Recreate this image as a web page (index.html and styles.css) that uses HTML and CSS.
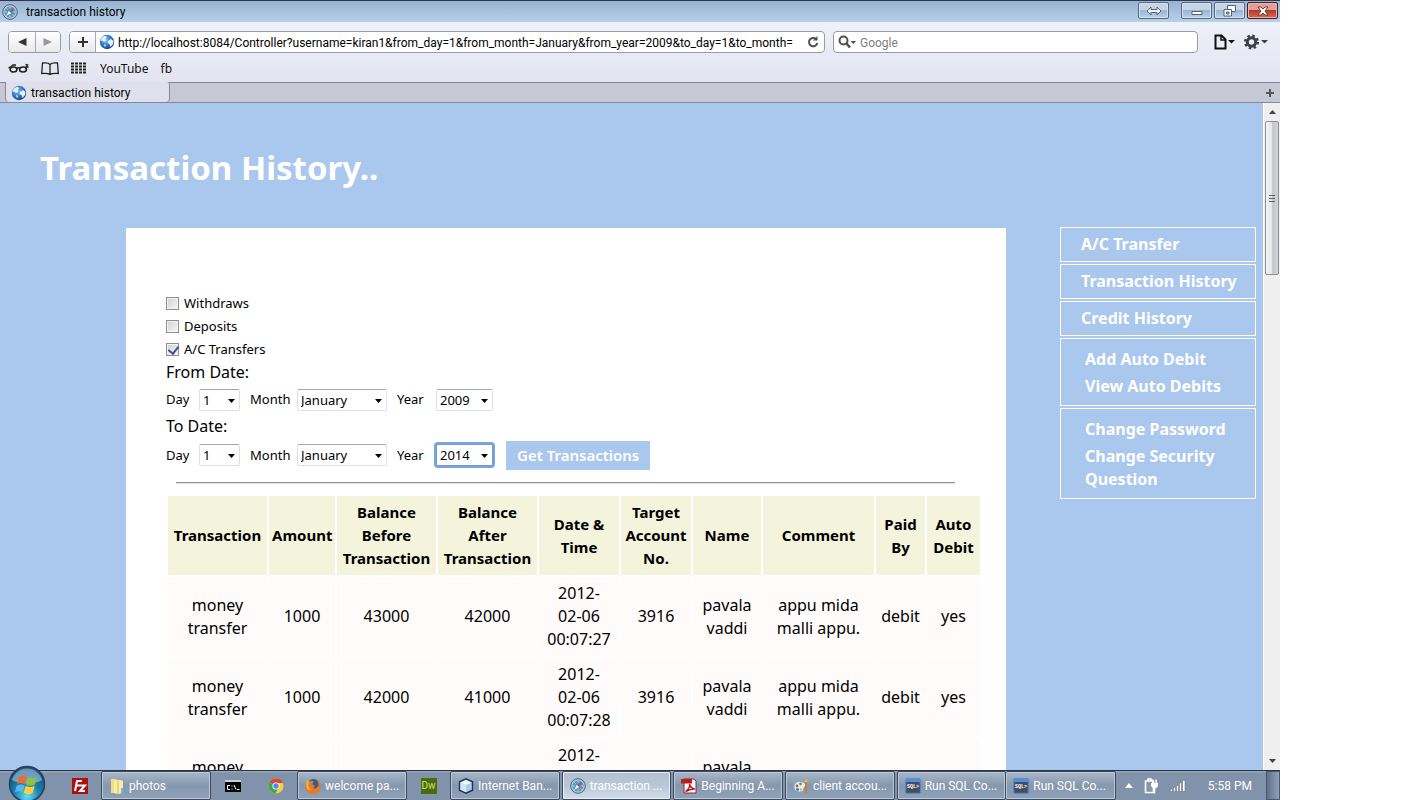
FILE: index.html
```html
<!DOCTYPE html>
<html lang="en">
<head>
<meta charset="utf-8">
<title>transaction history</title>
<link rel="stylesheet" href="styles.css">
</head>
<body>
<svg class="defs" aria-hidden="true">
  <defs>
    <radialGradient id="globe-fill" cx="40%" cy="35%" r="70%"><stop offset="0" stop-color="#8cc4f0"/><stop offset=".5" stop-color="#3a80cc"/><stop offset="1" stop-color="#123a80"/></radialGradient>
    <radialGradient id="orb-fill" cx="50%" cy="85%" r="85%"><stop offset="0" stop-color="#5fe0f5"/><stop offset=".45" stop-color="#1c7cae"/><stop offset="1" stop-color="#164a78"/></radialGradient>
    <symbol id="globe" viewBox="0 0 16 16">
      <circle cx="8" cy="8" r="7.2" fill="url(#globe-fill)"/>
      <path d="M3 3.500 6 1.800 8 3 6.500 5 7.500 6.500 5 8 3.500 6.500 1.500 7zM9 7l3-2 2.500 2-.5 3-2.500 3-1-3-2-1zM5 10l2 1-1 2.500z" fill="#e4f3ff"/>
    </symbol>
    <symbol id="compass" viewBox="0 0 16 16">
      <circle cx="8" cy="8" r="7.300" fill="#c3ccd5" stroke="#4f5e6e"/>
      <circle cx="8" cy="8" r="5.600" fill="#4b97c8"/>
      <path d="M8 3v1.500M8 11.500V13M3 8h1.500M11.500 8H13M4.500 4.500l1 1M10.500 10.500l1 1" stroke="#d8edf8"/>
      <path d="m12 4-2.800 5.200L6.800 6.800z" fill="#c94b45"/><path d="m4 12 2.800-5.200 2.400 2.400z" fill="#f2f5f7"/>
    </symbol>
    <symbol id="sql" viewBox="0 0 16 16">
      <path d="M1 1h14v14H1z" fill="#4a4d55" stroke="#2f6fd0"/><path d="M1 1h14v3H1z" fill="#4d8fe8"/>
      <text x="8" y="10" text-anchor="middle" class="sql-mark">SQL&gt;</text>
    </symbol>
  </defs>
</svg>
<div class="screen">
  <header class="titlebar">
    <svg class="icon-16"><use href="#compass"/></svg>
    <span class="titlebar-text">transaction history</span>
    <div class="window-buttons">
      <button class="win-btn win-btn-switch" aria-label="Switch"><svg width="16" height="10" viewBox="0 0 16 10"><path d="M1 5l4-4v2.500h6V1l4 4-4 4V6.500H5V9z" fill="#eef3f8" stroke="#50637a"/></svg></button>
      <button class="win-btn" aria-label="Minimize"><svg width="12" height="10" viewBox="0 0 12 10"><path d="M1 5.500h10v3H1z" fill="#fff" stroke="#50637a"/></svg></button>
      <button class="win-btn" aria-label="Restore"><svg width="13" height="12" viewBox="0 0 13 12"><path d="M4.500.5h8v6h-8z" fill="#fff" stroke="#50637a"/><path d="M1 4.500h7.500v6.500H1z" fill="#fff" stroke="#50637a"/><path d="M3.500 7h2.500v2H3.500z" fill="#a9bfd8" stroke="#50637a"/></svg></button>
      <button class="win-btn win-btn-close" aria-label="Close"><svg width="12" height="10" viewBox="0 0 12 10"><path d="M1 1h3l2 2 2-2h3L8 5l3 4H8L6 7 4 9H1l3-4z" fill="#fff" stroke="#6b3a40"/></svg></button>
    </div>
  </header>

  <div class="chrome">
    <div class="toolbar">
      <div class="nav-buttons">
        <button class="nav-btn" aria-label="Back"><svg width="10" height="10" viewBox="0 0 10 10"><path d="M9.500 1v8L1 5z" fill="#333"/></svg></button>
        <button class="nav-btn" aria-label="Forward"><svg width="10" height="10" viewBox="0 0 10 10"><path d="M.5 1v8L9 5z" fill="#999"/></svg></button>
      </div>
      <div class="address">
        <button class="nav-btn add-btn" aria-label="Add bookmark"><svg width="12" height="12" viewBox="0 0 12 12"><path d="M6 1v10M1 6h10" stroke="#333" stroke-width="2"/></svg></button>
        <svg class="icon-16"><use href="#globe"/></svg>
        <input class="address-input" type="text" aria-label="Address" value="http://localhost:8084/Controller?username=kiran1&amp;from_day=1&amp;from_month=January&amp;from_year=2009&amp;to_day=1&amp;to_month=">
        <button class="plain-btn reload" aria-label="Reload"><svg width="12" height="12" viewBox="0 0 12 12"><path d="M9 3a4.200 4.200 0 1 0 1.300 4" fill="none" stroke="#505050" stroke-width="2"/><path d="M6 4.500h4.500V0z" fill="#505050"/></svg></button>
      </div>
      <div class="search">
        <svg width="18" height="14" viewBox="0 0 18 14"><circle cx="5.500" cy="5.500" r="4" fill="none" stroke="#505050" stroke-width="2"/><path d="m8.500 8.500 3.500 4" stroke="#505050" stroke-width="2.500"/><path d="M12.500 6H18l-2.750 3z" fill="#505050"/></svg>
        <input class="search-input" type="text" aria-label="Search" placeholder="Google">
      </div>
      <button class="plain-btn menu-page" aria-label="Page menu"><svg width="22" height="16" viewBox="0 0 22 16"><path d="M1.500 1.500h6l4 4v9h-10z" fill="none" stroke="#111" stroke-width="2"/><path d="M7 1.500v4.500h5" fill="none" stroke="#111" stroke-width="1.500"/><path d="M14 6h7l-3.500 3.500z" fill="#111"/></svg></button>
      <button class="plain-btn" aria-label="Settings menu"><svg width="24" height="16" viewBox="0 0 24 16"><circle cx="7.500" cy="8" r="4.200" fill="none" stroke="#3b3f49" stroke-width="3"/><circle cx="7.500" cy="8" r="6.300" fill="none" stroke="#3b3f49" stroke-width="2.400" stroke-dasharray="2.500 2.448"/><path d="M17 6h7l-3.500 3.500z" fill="#3b3f49"/></svg></button>
    </div>

    <nav class="bookmarks">
      <button class="plain-btn" aria-label="Reading list"><svg width="21" height="12" viewBox="0 0 21 12"><path d="M.5 5.500h3M8.500 6.500q2-1.500 4 0M17.500 5h3M2.500 5l2.500-2h3M18.500 5l1-2-2-.5" fill="none" stroke="#222" stroke-width="1.500"/><ellipse cx="5.500" cy="7.500" rx="3.400" ry="2.500" fill="none" stroke="#222" stroke-width="1.600"/><ellipse cx="15" cy="7.500" rx="3.400" ry="2.500" fill="none" stroke="#222" stroke-width="1.600"/></svg></button>
      <button class="plain-btn" aria-label="Bookmarks"><svg width="18" height="13" viewBox="0 0 18 13"><path d="M9 2.500C7.500.7 4 .7 1.500 1L.7 11.500c3 0 6-.5 8.300 1 2.300-1.500 5.300-1 8.300-1L16.500 1C14 .7 10.500.7 9 2.500zv9.500" fill="none" stroke="#222" stroke-width="1.300"/></svg></button>
      <button class="plain-btn" aria-label="Top sites"><svg width="15" height="12" viewBox="0 0 15 12"><path d="M0 1.500h15M0 4.500h15M0 7.500h15M0 10.500h15" stroke="#222" stroke-width="2" stroke-dasharray="3 1"/></svg></button>
      <a class="bookmark" href="#">YouTube</a>
      <a class="bookmark" href="#">fb</a>
    </nav>

    <div class="tabbar">
      <div class="tab"><svg class="icon-16"><use href="#globe"/></svg><span>transaction history</span></div>
      <button class="plain-btn new-tab" aria-label="New tab"><svg width="8" height="8" viewBox="0 0 8 8"><path d="M4 0v8M0 4h8" stroke="#55565c" stroke-width="2"/></svg></button>
    </div>
  </div>

  <div class="viewport">
    <div class="page">
      <h1 class="page-title">Transaction History..</h1>
      <div class="columns">
        <main class="panel">
          <form class="filters">
            <label class="check-row"><input type="checkbox"><span>Withdraws</span></label>
            <label class="check-row"><input type="checkbox"><span>Deposits</span></label>
            <label class="check-row"><input type="checkbox" checked><span>A/C Transfers</span></label>
            <div class="date-title">From Date:</div>
            <div class="date-row">
              <label for="from-day">Day</label><select id="from-day" class="sel"><option>1</option><option>2</option></select>
              <label for="from-month">Month</label><select id="from-month" class="sel"><option>January</option><option>February</option></select>
              <label for="from-year">Year</label><select id="from-year" class="sel"><option>2009</option><option>2014</option></select>
            </div>
            <div class="date-title">To Date:</div>
            <div class="date-row date-row-to">
              <label for="to-day">Day</label><select id="to-day" class="sel"><option>1</option><option>2</option></select>
              <label for="to-month">Month</label><select id="to-month" class="sel"><option>January</option><option>February</option></select>
              <label for="to-year">Year</label><select id="to-year" class="sel sel-active"><option>2014</option><option>2009</option></select>
              <button class="submit" type="button">Get Transactions</button>
            </div>
          </form>
          <hr class="rule">
          <table class="history">
            <colgroup><col class="c-trans"><col class="c-amount"><col class="c-trans"><col class="c-trans"><col class="c-date"><col class="c-target"><col class="c-name"><col class="c-comment"><col class="c-paid"><col class="c-auto"></colgroup>
            <thead>
              <tr><th>Transaction</th><th>Amount</th><th>Balance Before Transaction</th><th>Balance After Transaction</th><th>Date &amp; Time</th><th>Target Account No.</th><th>Name</th><th>Comment</th><th>Paid By</th><th>Auto Debit</th></tr>
            </thead>
            <tbody>
              <tr><td>money transfer</td><td>1000</td><td>43000</td><td>42000</td><td>2012-<br>02-06 00:07:27</td><td>3916</td><td>pavala vaddi</td><td>appu mida malli appu.</td><td>debit</td><td>yes</td></tr>
              <tr><td>money transfer</td><td>1000</td><td>42000</td><td>41000</td><td>2012-<br>02-06 00:07:28</td><td>3916</td><td>pavala vaddi</td><td>appu mida malli appu.</td><td>debit</td><td>yes</td></tr>
              <tr><td>money transfer</td><td></td><td></td><td></td><td>2012-<br>02-06 00:07:28</td><td></td><td>pavala vaddi</td><td></td><td></td><td></td></tr>
            </tbody>
          </table>
        </main>
        <nav class="side">
          <div class="side-box"><a href="#">A/C Transfer</a></div>
          <div class="side-box"><a href="#">Transaction History</a></div>
          <div class="side-box"><a href="#">Credit History</a></div>
          <div class="side-box side-group"><a href="#">Add Auto Debit</a><a href="#">View Auto Debits</a></div>
          <div class="side-box side-group"><a href="#">Change Password</a><a href="#">Change Security Question</a></div>
        </nav>
      </div>
    </div>
    <div class="scrollbar">
      <div class="scroll-arrow"><svg width="7" height="4" viewBox="0 0 7 4"><path d="M0 4 3.500 0 7 4z" fill="#444"/></svg></div>
      <div class="scroll-thumb"></div>
      <div class="scroll-track"></div>
      <div class="scroll-arrow"><svg width="7" height="4" viewBox="0 0 7 4"><path d="M0 0l3.500 4L7 0z" fill="#444"/></svg></div>
    </div>
  </div>

  <footer class="taskbar">
    <button class="start" aria-label="Start"><svg width="38" height="38" viewBox="0 0 38 38"><circle cx="19" cy="19" r="17.500" fill="url(#orb-fill)" stroke="#23405e" stroke-width="1.500"/><path d="M4 15a15.500 15.500 0 0 1 30 0c-8 5-20 5-30 0z" fill="#fff" opacity=".38"/><path d="M11 12c3-2 5-1.500 8 0l-2 7c-3-1.500-5-1.500-8 0z" fill="#ec6a35"/><path d="M20 12.500c3 1.500 6 1.500 9-.5l-2 7.500c-3 1.800-6 1.500-9 0z" fill="#91c341"/><path d="M8.700 20.500c3-1.500 5-1.500 8 0l-2 7c-3-1.800-5-1.500-8 0z" fill="#59b5ee"/><path d="M17.700 21c3 1.500 6 1.500 9 0l-2 7c-3 1.800-6 1.500-9-.2z" fill="#ffcf3c"/></svg></button>
    <button class="pin" aria-label="FileZilla"><svg width="16" height="16" viewBox="0 0 16 16"><path d="M0 0h16v16H0z" fill="#b00d0d"/><path d="M3 13 5 3h5M4 7.500h4M8 7.500h5L8 13h5" fill="none" stroke="#fff" stroke-width="2"/></svg></button>
    <button class="task"><svg class="icon-16" viewBox="0 0 16 16"><path d="M2 1h5l1 2v12H2z" fill="#f4dc82"/><path d="M5 2h7l2 1v12l-5 1-4-1z" fill="#f9eba8"/><path d="M9 3v12.500" stroke="#d8b958"/><path d="M13 10v5" stroke="#68b8d8" stroke-width="2"/></svg><span>photos</span></button>
    <button class="pin" aria-label="Command prompt"><svg width="16" height="12" viewBox="0 0 16 12"><path d="M0 0h16v12H0z" fill="#c9ced8"/><path d="M0 2h16v10H0z" fill="#000"/><path d="M5 5.500H2.500v4H5M7 5.500v1M7 8.500v1M9 5l2 4.500M12 9.500h2.500" fill="none" stroke="#fff"/></svg></button>
    <button class="pin" aria-label="Chrome"><svg width="16" height="16" viewBox="0 0 16 16"><circle cx="8" cy="8" r="7.500" fill="#f6cf3a"/><path d="M8 8 1.500 4.300A7.500 7.500 0 0 1 14.900 5H8z" fill="#e04436"/><path d="M1.500 4.300A7.500 7.500 0 0 0 7.500 15.500L10.500 9.500 8 8z" fill="#3ea853"/><circle cx="8" cy="8" r="3.600" fill="#fff"/><circle cx="8" cy="8" r="2.700" fill="#4a8be8"/></svg></button>
    <button class="task"><svg class="icon-16" viewBox="0 0 16 16"><circle cx="8.500" cy="7.500" r="6.500" fill="#285da8"/><path d="M2 2l2 1.500C6 2 8 3 9 4L7 6l3 2-2 2 3 .5 2.500-3C13.500 5 12.500 3 11.500 1.500 15 3 16 6 15.500 9A7.500 7.500 0 1 1 1 6z" fill="#e9791d"/><path d="M2 2l2 2-1 4 3 4H3C1 9 1 5 2 2z" fill="#f9b73a"/></svg><span>welcome pa...</span></button>
    <button class="pin" aria-label="Dreamweaver"><span class="dw">Dw</span></button>
    <div class="task-group">
      <button class="task"><svg class="icon-16" viewBox="0 0 16 16"><path d="m8 .8 6.500 3v8.400L8 15.200l-6.500-3V3.800z" fill="#a9cdec" stroke="#1d3557" stroke-width="1.400"/><path d="m2.500 4.500 5.500 2.500 5.500-2.500L8 2z" fill="#f2f8fd"/><path d="M8 7v7.200l-5.500-2.500V4.500z" fill="#d4e7f6"/></svg><span>Internet Ban...</span></button>
      <button class="task task-active"><svg class="icon-16"><use href="#compass"/></svg><span>transaction ...</span></button>
      <button class="task"><svg class="icon-16" viewBox="0 0 16 16"><path d="M3 1h10l2 2v12H3z" fill="#fff" stroke="#9c2024"/><path d="M0 1h11v4.500H0z" fill="#b51f24"/><path d="M4.500 13.500C8 11 9 8 8.500 6c1 3 3 5 5.500 5-3-.5-6 .5-9.500 2.500z" fill="none" stroke="#b51f24" stroke-width="1.500"/></svg><span>Beginning A...</span></button>
      <button class="task"><svg class="icon-16" viewBox="0 0 16 16"><path d="M1 10c-1-5 4-8 9-6 4 2 3 4 1.500 5s0 3-1.500 4c-3 2-8 1-9-3z" fill="#e2eff6" stroke="#78a9c4"/><circle cx="4" cy="8" r="1.400" fill="#d64b3c"/><circle cx="7.500" cy="6" r="1.400" fill="#52a345"/><circle cx="4.500" cy="11.500" r="1.400" fill="#3877ca"/><circle cx="8" cy="11.500" r="1.300" fill="#efb82d"/><path d="M13 4v11" stroke="#d77b20" stroke-width="2"/><path d="M11.500 4 13 0l2 4z" fill="#edb54d"/></svg><span>client accou...</span></button>
      <div class="task-pair">
        <button class="task"><svg class="icon-16"><use href="#sql"/></svg><span>Run SQL Co...</span></button>
        <button class="task"><svg class="icon-16"><use href="#sql"/></svg><span>Run SQL Co...</span></button>
      </div>
    </div>
    <div class="tray">
      <svg width="8" height="5" viewBox="0 0 8 5"><path d="M0 5 4 0l4 5z" fill="#fff"/></svg>
      <svg width="15" height="16" viewBox="0 0 15 16"><path d="M1.500 3h8v11.500h-8zM4 1h3v2H4z" fill="#8595ab" stroke="#fff" stroke-width="1.600"/><path d="M7 5h7v3l-2 2.500H9L7 8z" fill="#fff"/><path d="M8.800 1.500V5M12.200 1.500V5M10.500 10v5.500" stroke="#fff" stroke-width="1.500"/></svg>
      <svg width="16" height="12" viewBox="0 0 16 12"><path d="M.5 9h2v2.500h-2zM3.500 7.500h2v4h-2zM6.500 5.500h2v6h-2zM9.500 3h2v8.500h-2zM12.500.5h2.500v11h-2.500z" fill="#fff" stroke="#5a6679" stroke-width=".5"/></svg>
      <span class="clock">5:58 PM</span>
    </div>
    <button class="show-desktop" aria-label="Show desktop"></button>
  </footer>
</div>
</body>
</html>
```
FILE: styles.css
```css
* { box-sizing: border-box; }
body {
  margin: 0;
  padding-right: 125px;
  background: #fff;
  font-family: Roboto, "Noto Sans", sans-serif;
  font-size: 12px;
  color: #000;
}
button { font: inherit; padding: 0; margin: 0; border: 0; background: none; color: inherit; }
svg { display: block; flex: none; }
.defs { position: absolute; width: 0; height: 0; }
.icon-16 { width: 16px; height: 16px; }
.screen { display: flex; flex-direction: column; height: 100vh; overflow: hidden; }

/* Window frame */
.titlebar {
  display: flex;
  align-items: center;
  height: 22px;
  padding-left: 2px;
  border-top: 1px solid #30374a;
  background: linear-gradient(#97b3d2, #b8d0e9);
}
.titlebar-text { flex: 1; margin-left: 8px; }
.window-buttons { display: flex; align-self: flex-start; gap: 2px; padding: 1px 2px 0 0; }
.win-btn {
  display: flex;
  align-items: center;
  justify-content: center;
  width: 31px;
  height: 17px;
  border: 1px solid #556983;
  border-radius: 2px;
  background: linear-gradient(#c4d5e8 50%, #9bb6d2 50%, #b9d0e6);
  box-shadow: inset 0 0 0 1px #d4e1ef;
}
.win-btn-switch { margin-right: 10px; }
.win-btn-close {
  border-color: #4a1c28;
  background: linear-gradient(#dfa095 50%, #b83a26 50%, #cf7059);
  box-shadow: inset 0 0 0 1px #e8b4aa;
}

/* Browser toolbars */
.chrome { background: linear-gradient(#eef0fa, #dfe0ec); }
.toolbar { display: flex; align-items: center; height: 40px; padding: 0 12px 0 8px; gap: 8px; }
.nav-buttons, .address, .search {
  display: flex;
  align-items: center;
  height: 22px;
  border: 1px solid #989ba6;
  border-radius: 4px;
  background: #fff;
  overflow: hidden;
}
.nav-btn {
  display: flex;
  align-items: center;
  justify-content: center;
  width: 26px;
  height: 20px;
  background: linear-gradient(#fff, #e9e9ec);
}
.nav-btn + .nav-btn { border-left: 1px solid #a4a6b0; width: 25px; }
.address { flex: 756 1 0; min-width: 0; }
.add-btn { border-right: 1px solid #a4a6b0; margin-right: 3px; }
.address-input, .search-input {
  flex: 1;
  min-width: 0;
  padding: 2px 3px 0;
  border: 0;
  outline: 0;
  background: none;
  font: inherit;
}
.search { flex: 360 1 0; min-width: 0; padding-left: 4px; }
.search-input::placeholder { color: #808080; opacity: 1; }
.search-input { padding-left: 4px; }
.reload { margin: 0 5px; }
.menu-page { margin-left: 8px; }
.bookmarks { display: flex; align-items: center; height: 20px; margin-top: -4px; padding-left: 8px; gap: 12px; }
.bookmark { color: #111; text-decoration: none; font-family: "Noto Sans", sans-serif; }
.bookmark:first-of-type { margin-left: 2px; }
.tabbar {
  display: flex;
  align-items: center;
  justify-content: space-between;
  height: 21px;
  margin-top: 4px;
  padding: 0 6px 0 5px;
  border-top: 1px solid #85879a;
  border-bottom: 1px solid #85879a;
  background: #c6c8d4;
}
.tab {
  display: flex;
  align-items: center;
  align-self: stretch;
  width: 165px;
  margin-top: -1px;
  padding: 2px 0 0 5px;
  gap: 4px;
  border: solid #85879a;
  border-width: 0 1px;
  border-radius: 0 3px 4px 4px;
  background: #dfe0ec;
}

/* Page */
.viewport { display: flex; flex: 1; min-height: 0; }
.page {
  flex: 1;
  min-width: 0;
  overflow: hidden;
  background: #aac7ee;
  font-family: "Comic Sans MS", "Noto Sans", sans-serif;
  font-size: 16px;
  line-height: 23px;
}
.page-title { margin: 0; padding: 41px 40px 35px; font-size: 33px; line-height: 48px; color: #fff; }
.columns { display: flex; align-items: flex-start; gap: 54px; padding: 0 7px 0 126px; }
.panel { flex: 1; min-width: 0; margin-top: 1px; padding: 64px 24px 40px 40px; background: #fff; }
.check-row { display: flex; align-items: center; height: 23px; gap: 5px; font-size: 13px; }
.check-row input {
  appearance: none;
  width: 13px;
  height: 13px;
  margin: 0;
  border: 1px solid #8e8f8f;
  background: linear-gradient(135deg, #cfd2d6, #f6f6f6);
  box-shadow: inset 0 0 0 1px #f4f4f4;
}
.check-row input:checked::before {
  content: "";
  display: block;
  width: 5px;
  height: 8px;
  margin: 0 0 0 3px;
  border: solid #3f5296;
  border-width: 0 2px 2px 0;
  transform: rotate(38deg);
}
.date-title { line-height: 23px; }
.date-row {
  display: grid;
  grid-template-columns: 23px 41px 37px 90px 29px 57px auto;
  column-gap: 10px;
  align-items: center;
  justify-content: start;
  height: 31px;
  font-size: 13px;
}
.date-row-to { height: 34px; }
.sel {
  appearance: none;
  height: 22px;
  padding: 0 4px 0 3px;
  border: 1px solid #dcdfe4;
  border-top-color: #a5a7ac;
  border-radius: 2px;
  background: #fff url("data:image/svg+xml,%3Csvg xmlns='http://www.w3.org/2000/svg' width='7' height='4'%3E%3Cpath d='M0 0h7L3.500 4z'/%3E%3C/svg%3E") no-repeat right 4px top 9px;
  font: inherit;
  line-height: 20px;
  color: #000;
}
.sel-active { border-color: #6f9cd4; box-shadow: 0 0 0 2px #7aa5dc; }
.submit { height: 29px; margin-left: 3px; padding: 0 11px; background: #aac7ee; color: #fff; font-size: 15px; font-weight: 600; }
.rule { height: 2px; margin: 10px 27px 10px 10px; border: 0; border-top: 1px solid #8f8f8f; border-bottom: 1px solid #e4e4e4; }
.history { width: 100%; table-layout: fixed; border-spacing: 2px; text-align: center; }
.history th, .history td { height: 79px; padding: 5px 3px; }
.history th { background: #f4f4dc; font-size: 15px; }
.history td { background: #fffbfa; }
.c-trans { width: 99px; }
.c-amount { width: 66px; }
.c-date { width: 80px; }
.c-target { width: 70px; }
.c-name { width: 68px; }
.c-paid { width: 49px; }
.c-auto { width: 53px; }

/* Side menu */
.side { display: flex; flex-direction: column; flex: none; width: 196px; gap: 2px; font-weight: 700; }
.side-box { padding: 5px 12px 5px 20px; border: 1px solid #fff; }
.side-box a { display: block; color: #fff; text-decoration: none; }
.side-group { display: flex; flex-direction: column; gap: 4px; padding: 9px 24px 7px; }

/* Scrollbar */
.scrollbar { display: flex; flex-direction: column; width: 17px; border-left: 1px solid #fff; background: #efeff0; }
.scroll-arrow { display: flex; align-items: center; justify-content: center; height: 18px; }
.scroll-thumb {
  height: 154px;
  margin: 0 1px;
  border: 1px solid #8e8f94;
  border-radius: 2px;
  background: linear-gradient(#606060, #606060) center 73px / 6px 1px no-repeat, linear-gradient(#606060, #606060) center 76px / 6px 1px no-repeat, linear-gradient(#606060, #606060) center 79px / 6px 1px no-repeat, linear-gradient(90deg, #f4f4f5, #e4e4e7 50%, #c4c5ca 55%, #d3d4d8);
}
.scroll-track { flex: 1; }

/* Taskbar */
.taskbar {
  display: flex;
  height: 30px;
  flex: none;
  border-top: 1px solid #2a3446;
  background: linear-gradient(#94a5ba 1px, #8193aa 2px);
  color: #fff;
}
.start { flex: none; width: 58px; margin-top: -6px; padding-left: 8px; align-self: flex-start; z-index: 1; }
.pin { display: flex; flex: none; align-items: center; justify-content: center; width: 43px; }
.task {
  display: flex;
  align-items: center;
  flex: 0 1 110px;
  min-width: 0;
  gap: 4px;
  padding: 0 0 0 7px;
  border: 1px solid #3c4a5f;
  border-radius: 2px;
  background: linear-gradient(#a9b7c8, #8698ae 50%, #8fa1b7);
  box-shadow: inset 0 0 0 1px #bcc8d6;
  white-space: nowrap;
  overflow: hidden;
}
.task-active { background: linear-gradient(#b4c1d1, #b8c6d7 50%, #d2dde9); box-shadow: inset 0 0 0 1px #e8eef5; }
.task-group { display: flex; flex: 667 1 0; gap: 2px; min-width: 0; }
.task-pair { display: flex; flex: 0 1 220px; min-width: 0; }
.task-pair .task + .task { border-left: 0; }
.dw { width: 16px; height: 16px; background: #4c6a10; color: #c5e860; font-size: 10px; line-height: 16px; text-align: center; }
.sql-mark { fill: #fff; font: 700 5px "Liberation Mono", monospace; }
.tray { display: flex; align-items: center; gap: 11px; padding: 0 14px 0 9px; }
.clock { margin-left: 11px; }
.show-desktop { width: 14px; border: 1px solid #49586d; background: linear-gradient(90deg, #5f7087, #8fa1b8); }
```
